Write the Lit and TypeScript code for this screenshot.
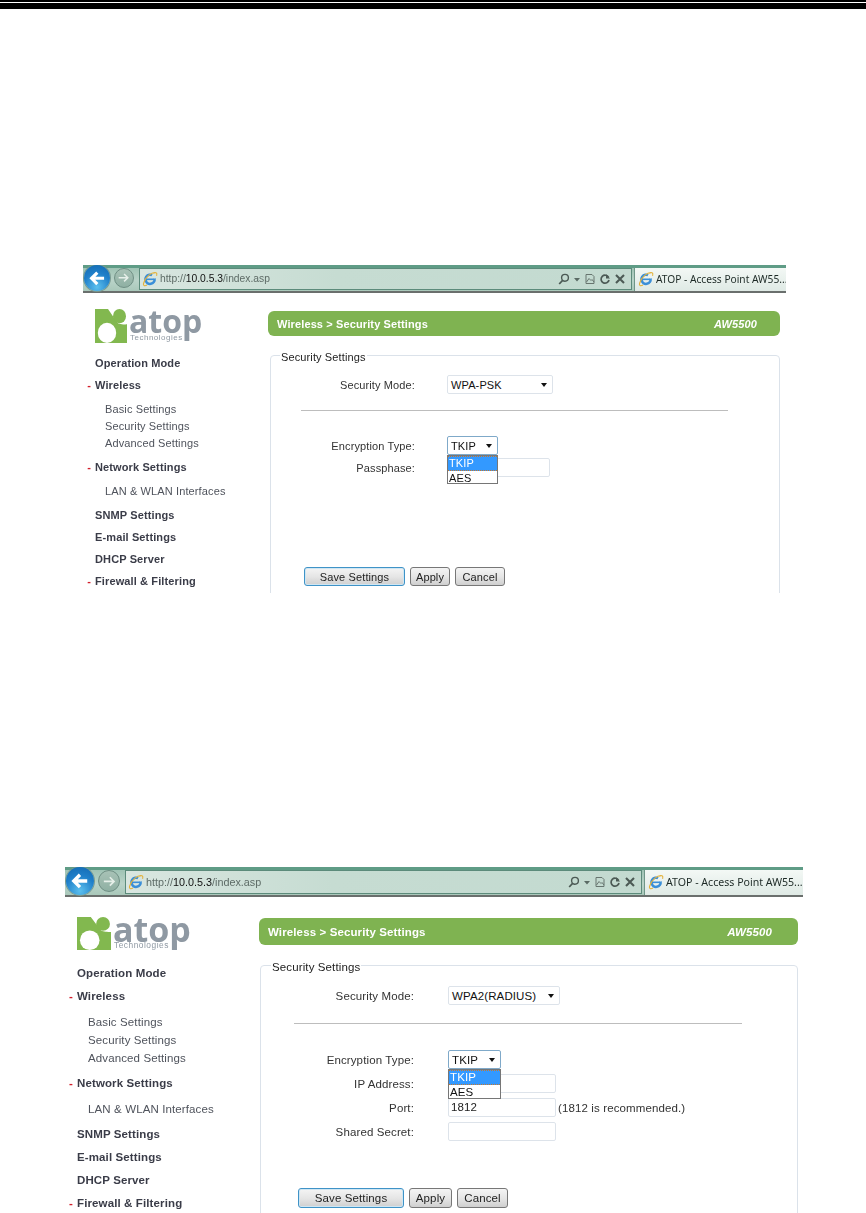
import { LitElement, html, css, svg } from "lit";
import { customElement, property } from "lit/decorators.js";

const ieIcon = html`<svg class="ie" viewBox="0 0 16 16">
  <circle cx="8" cy="8.3" r="4.6" fill="none" stroke="#3b8fd8" stroke-width="2.6" stroke-dasharray="24 5" transform="rotate(-10 8 8.3)"/>
  <rect x="4" y="7.5" width="8" height="1.6" fill="#3b8fd8"/>
  <path d="M13.5 1.6C10 1 3.5 5.5 1.5 12.5c-.5 2 1 3 3.5 1.6M11 2.2c2.6-1.2 4.6-.6 3.6 2.6" fill="none" stroke="#e3b23c" stroke-width="1.1"/>
</svg>`;

const logoMark = svg`
  <path d="M0 0H13L22 12C24 14.5 32 14 32 14V31H0Z" fill="#82b84f"/>
  <circle cx="24.5" cy="6.5" r="6.5" fill="#82b84f"/>
  <circle cx="12" cy="21.8" r="9.2" fill="#fff"/>
`;

@customElement("ui-shot")
class UiShot extends LitElement {
  @property() variant = "a";

  static styles = css`
    :host { display: block; font-family: "Liberation Sans", Arial, sans-serif; color: #333; overflow: hidden; }
    :host([variant="a"]) {
      --w: 703px; --h: 328px; --tb: 28px; --bk: 26px; --fw: 20px; --addr-gap: 5px; --tab: 152px; --fs: 11px;
      --side: 185px; --logo-top: 16px; --logo-mark: 32px; --logo-fs: 32px; --logo-h: 34px; --tech-fs: 8px;
      --menu-top: 9px; --mh: 22px; --sh: 17px; --sp: 4.5px; --pad-l: 12px; --sub-l: 22px; --ls: 0.12px;
      --bar-top: 18px; --bar-h: 25px; --bar-w: 512px; --bar-l: 9px; --ver-r: 23px;
      --fs-top: 11px; --fs-l: 2px; --fs-w: 510px; --leg: 9px;
      --lab: 144px; --lab-gap: 32px; --mode-top: 11px; --mode-w: 106px; --hr-l: 30px; --hr-w: 427px; --hr-t: 16px; --hr-b: 25px;
      --sel-w: 51px; --row-h: 19px; --row-gap: 3px; --inp-w: 103px; --menu-h: 14.5px;
      --btn-top: 90px; --btn-l: 33px; --btn-h: 19px; --b1: 101px; --b2: 40px; --b3: 50px;
      --sel-drop: 29px; --tab-fs: 10.2px; --addr-fs: 10.3px;
    }
    :host([variant="b"]) {
      --w: 738px; --h: 346px; --tb: 30px; --bk: 28px; --fw: 22px; --addr-gap: 5px; --tab: 159px; --fs: 11.5px;
      --side: 194px; --logo-top: 20px; --logo-mark: 34px; --logo-fs: 34px; --logo-h: 33px; --tech-fs: 8.4px;
      --menu-top: 12px; --mh: 23px; --sh: 18px; --sp: 5px; --pad-l: 12px; --sub-l: 23px; --ls: 0.12px;
      --bar-top: 21px; --bar-h: 27px; --bar-w: 539px; --bar-l: 9px; --ver-r: 26px;
      --fs-top: 12px; --fs-l: 1px; --fs-w: 538px; --leg: 10px;
      --lab: 153px; --lab-gap: 34px; --mode-top: 12px; --mode-w: 112px; --hr-l: 33px; --hr-w: 448px; --hr-t: 18px; --hr-b: 26px;
      --sel-w: 53px; --row-h: 19px; --row-gap: 5px; --inp-w: 108px; --menu-h: 15px;
      --btn-top: 47px; --btn-l: 37px; --btn-h: 20px; --b1: 106px; --b2: 43px; --b3: 51px;
      --sel-drop: 30px; --tab-fs: 10.6px; --addr-fs: 10.8px;
    }
    .shot { width: var(--w); height: var(--h); overflow: hidden; font-size: var(--fs); letter-spacing: var(--ls); filter: blur(0.3px); }

    .toolbar { height: var(--tb); box-sizing: border-box; display: flex; align-items: center; position: relative;
      background: linear-gradient(#5f9c86 0 3px, #9fc3b4 3px, #b9d3c8 60%, #a9c8ba); border-bottom: 2px solid #6a6f6d; }
    .back { width: var(--bk); height: var(--bk); border-radius: 50%; flex: none; margin-left: 1px; display: flex; align-items: center; justify-content: center;
      background: radial-gradient(circle at 50% 85%, #5cc0ee, #1f7fc9 55%, #1268b0); box-shadow: 0 0 0 1px #7a9a90; }
    .fwd { width: var(--fw); height: var(--fw); border-radius: 50%; flex: none; margin-left: 4px; display: flex; align-items: center; justify-content: center;
      background: linear-gradient(#a8c2b6, #8fb0a3); border: 1px solid #6f8f84; box-sizing: border-box; }
    .back svg { width: 64%; height: 64%; }
    .fwd svg { width: 74%; height: 74%; }
    .addr { flex: 1; min-width: 0; height: calc(var(--tb) - 6px); margin-top: 1px; box-sizing: border-box; margin-left: var(--addr-gap);
      border: 1px solid #5c8b7b; display: flex; align-items: center; padding-left: 2px; gap: 2px;
      background: linear-gradient(90deg, #d9e6e0, #c6dcd2 40%, #c3dad0); color: #5d6b66; font-size: var(--addr-fs); letter-spacing: 0; white-space: nowrap; }
    .addr b { font-weight: 400; color: #111; }
    .ie { width: 16px; height: 16px; flex: none; }
    .tools { margin-left: auto; display: flex; align-items: center; gap: 3px; padding-right: 5px; }
    .tools svg { width: 12px; height: 12px; display: block; }
    .tools svg.caret { width: 8px; }
    .tab { width: var(--tab); flex: none; height: calc(var(--tb) - 5px); margin: 2px 0 0 2px; box-sizing: border-box; padding-left: 3px; display: flex; align-items: center; gap: 2px;
      background: linear-gradient(#f3f8f5, #dfeae5); border-left: 1px solid #6f9688; font-family: "Noto Sans", sans-serif; font-size: var(--tab-fs); letter-spacing: 0; color: #1d2a26; white-space: nowrap; overflow: hidden; }

    .body { display: grid; grid-template-columns: var(--side) var(--bar-w); align-items: start; }

    .side { padding: var(--logo-top) 0 0 var(--pad-l); }
    .logo { display: flex; align-items: flex-start; height: var(--logo-h); gap: 2px; }
    .logo svg { width: var(--logo-mark); height: var(--logo-h); flex: none; }
    .word { position: relative; font-family: "Open Sans", "Liberation Sans", sans-serif; font-weight: 700; font-size: var(--logo-fs); line-height: 0.72; color: #8f99a3; letter-spacing: 0; height: var(--logo-h); }
    .word small { position: absolute; left: 1px; bottom: 1px; font-family: "Liberation Sans", sans-serif; font-weight: 400; font-size: var(--tech-fs); line-height: 1; color: #8f99a3; letter-spacing: 0.5px; }
    .menu { list-style: none; margin: var(--menu-top) 0 0; padding: 0; }
    .menu li { display: block; }
    .m { height: var(--mh); line-height: var(--mh); font-weight: 700; color: #3a3c48; position: relative; white-space: nowrap; }
    .dash { position: absolute; right: 100%; margin-right: 4px; color: #d21e2b; font-weight: 700; }
    .has { position: relative; display: inline-block; }
    .subs { padding: var(--sp) 0; margin: 0; list-style: none; }
    .s { height: var(--sh); line-height: var(--sh); padding-left: calc(var(--sub-l) - var(--pad-l)); color: #4f535c; white-space: nowrap; }

    .bar { height: var(--bar-h); margin-top: var(--bar-top); border-radius: 6px; background: #7fb351; color: #fff; font-weight: 700; display: flex; align-items: center; justify-content: space-between; padding: 0 var(--ver-r) 0 var(--bar-l); }
    .bar i { font-weight: 700; }
    fieldset { margin: var(--fs-top) 0 0 var(--fs-l); padding: 0; width: var(--fs-w); box-sizing: border-box; border: 1px solid #dbe2ea; border-radius: 4px; min-inline-size: 0; }
    legend { margin-left: var(--leg); padding: 4px 1px 0; line-height: 13px; color: #222; }
    .row { display: grid; grid-template-columns: var(--lab) auto; column-gap: var(--lab-gap); align-items: center; height: var(--row-h); position: relative; }
    .row + .row { margin-top: var(--row-gap); }
    .row > label { text-align: right; color: #333; white-space: nowrap; }
    .ctl { display: flex; align-items: center; gap: 2px; white-space: nowrap; position: relative; }
    .modewrap { margin-top: var(--mode-top); }
    hr { border: 0; height: 1px; background: #bdbdbd; margin: var(--hr-t) 0 var(--hr-b) var(--hr-l); width: var(--hr-w); }
    .sel { box-sizing: border-box; height: var(--row-h); border: 1px solid #dde3ea; border-radius: 2px; background: #fff; display: flex; align-items: center; justify-content: space-between; padding: 0 5px 0 3px; color: #111; }
    .sel::after { content: ""; border: 3.5px solid transparent; border-top: 4px solid #111; border-bottom: 0; }
    .mode { width: var(--mode-w); }
    .enc { width: var(--sel-w); border-color: #7fa9c9; }
    .inp { box-sizing: border-box; width: var(--inp-w); height: var(--row-h); border: 1px solid #dde3ea; border-radius: 2px; background: #fff; padding: 0 0 1px 2px; display: flex; align-items: center; color: #222; }
    .drop { position: absolute; left: 0; top: var(--row-h); width: var(--sel-w); height: var(--sel-drop); box-sizing: border-box; border: 1px solid #767676; background: #fff; z-index: 2; color: #111; }
    .drop div { height: var(--menu-h); line-height: var(--menu-h); padding-left: 1px; box-sizing: border-box; }
    .drop .on { background: #3399ff; color: #fff; border-top: 1px dotted #c8772a; border-bottom: 1px dotted #c8772a; line-height: calc(var(--menu-h) - 2px); }
    .btns { display: flex; gap: 5px; margin: var(--btn-top) 0 0 var(--btn-l); padding-bottom: 30px; }
    .btn { box-sizing: border-box; height: var(--btn-h); border: 1px solid #777; border-radius: 3px; background: linear-gradient(#f4f4f4, #e6e6e6 50%, #cfcfcf); display: flex; align-items: center; justify-content: center; color: #222; }
    .b1 { width: var(--b1); border-color: #3f93c7; box-shadow: inset 0 0 0 1px #cfe6f3; }
    .b2 { width: var(--b2); }
    .b3 { width: var(--b3); }
  `;

  private sideItems() {
    return html`<ul class="menu">
      <li class="m">Operation Mode</li>
      <li class="m"><span class="has"><span class="dash">-</span>Wireless</span></li>
      <li><ul class="subs">
        <li class="s">Basic Settings</li><li class="s">Security Settings</li><li class="s">Advanced Settings</li>
      </ul></li>
      <li class="m"><span class="has"><span class="dash">-</span>Network Settings</span></li>
      <li><ul class="subs"><li class="s">LAN &amp; WLAN Interfaces</li></ul></li>
      <li class="m">SNMP Settings</li>
      <li class="m">E-mail Settings</li>
      <li class="m">DHCP Server</li>
      <li class="m"><span class="has"><span class="dash">-</span>Firewall &amp; Filtering</span></li>
    </ul>`;
  }

  private rows() {
    const drop = html`<div class="drop"><div class="on">TKIP</div><div>AES</div></div>`;
    const enc = html`<div class="row"><label>Encryption Type:</label><div class="ctl"><div class="sel enc">TKIP</div>${drop}</div></div>`;
    if (this.variant === "a") {
      return html`${enc}
        <div class="row"><label>Passphase:</label><div class="ctl"><div class="inp"></div></div></div>`;
    }
    return html`${enc}
      <div class="row"><label>IP Address:</label><div class="ctl"><div class="inp"></div></div></div>
      <div class="row"><label>Port:</label><div class="ctl"><div class="inp">1812</div><span>(1812 is recommended.)</span></div></div>
      <div class="row"><label>Shared Secret:</label><div class="ctl"><div class="inp"></div></div></div>`;
  }

  render() {
    const mode = this.variant === "a" ? "WPA-PSK" : "WPA2(RADIUS)";
    return html`<div class="shot">
      <div class="toolbar">
        <div class="back"><svg viewBox="0 0 16 16"><path d="M14.5 8H3M8 2.5 2.5 8 8 13.5" fill="none" stroke="#fff" stroke-width="3"/></svg></div>
        <div class="fwd"><svg viewBox="0 0 16 16"><path d="M2 8h11M8.5 3.5 13 8l-4.5 4.5" fill="none" stroke="#e6efe9" stroke-width="1.8"/></svg></div>
        <div class="addr">${ieIcon}<span>http://<b>10.0.5.3</b>/index.asp</span>
          <div class="tools">
            <svg viewBox="0 0 12 12"><circle cx="7" cy="4.8" r="3.4" fill="none" stroke="#4c5a55" stroke-width="1.4"/><path d="M4.6 7.4 1.2 11" stroke="#4c5a55" stroke-width="1.7"/></svg>
            <svg class="caret" viewBox="0 0 8 12"><path d="M1 5h6L4 8.5Z" fill="#5a6a64"/></svg>
            <svg viewBox="0 0 12 12"><path d="M2 1.5h6l2 2v7H2ZM2.5 9 5 5.5l2 2 1-1 2 2.5" fill="none" stroke="#67756f" stroke-width="1"/></svg>
            <svg viewBox="0 0 12 12"><path d="M9.6 4.3A4 4 0 1 0 10 7" fill="none" stroke="#4c5a55" stroke-width="1.7"/><path d="M7 1v4.4h4Z" fill="#4c5a55"/></svg>
            <svg viewBox="0 0 12 12"><path d="M2 2l8 8M10 2l-8 8" stroke="#4c5a55" stroke-width="2.1"/></svg>
          </div>
        </div>
        <div class="tab">${ieIcon}<span>ATOP - Access Point AW55...</span></div>
      </div>
      <div class="body">
        <div class="side">
          <div class="logo">
            <svg viewBox="0 0 32 31" preserveAspectRatio="none">${logoMark}</svg>
            <div class="word">atop<small>Technologies</small></div>
          </div>
          ${this.sideItems()}
        </div>
        <div class="main">
          <div class="bar"><span>Wireless &gt; Security Settings</span><i>AW5500</i></div>
          <fieldset>
            <legend>Security Settings</legend>
            <div class="row modewrap"><label>Security Mode:</label><div class="ctl"><div class="sel mode">${mode}</div></div></div>
            <hr />
            ${this.rows()}
            <div class="btns">
              <div class="btn b1">Save Settings</div><div class="btn b2">Apply</div><div class="btn b3">Cancel</div>
            </div>
          </fieldset>
        </div>
      </div>
    </div>`;
  }
}

@customElement("app-root")
class AppRoot extends LitElement {
  static styles = css`
    :host { display: block; width: 866px; height: 1213px; overflow: hidden; background: #fff; }
    .rule1 { height: 2px; background: #000; }
    .rule2 { height: 6px; margin-top: 1px; background: #000; }
    .s1 { margin: 256px 0 0 83px; }
    .s2 { margin: 274px 0 0 65px; }
  `;
  render() {
    return html`<div class="rule1"></div><div class="rule2"></div>
      <ui-shot class="s1" variant="a"></ui-shot>
      <ui-shot class="s2" variant="b"></ui-shot>`;
  }
}
